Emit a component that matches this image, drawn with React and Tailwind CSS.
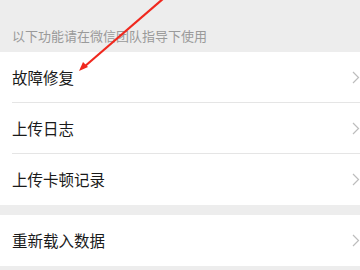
const items = ["故障修复", "上传日志", "上传卡顿记录"];

function Chevron() {
  return (
    <svg width="8" height="13" viewBox="0 0 8 13" className="shrink-0">
      <path d="M1 1l5.5 5.5L1 12" fill="none" stroke="#bdbdbd" strokeWidth="1.2" />
    </svg>
  );
}

function Row({ label, last }) {
  return (
    <div className="relative flex h-[51px] items-center justify-between bg-white pl-3 pr-0">
      <span className="text-[15.5px] text-[#1a1a1a]">{label}</span>
      <Chevron />
      {!last && <div className="absolute bottom-0 left-3 right-0 h-px bg-[#e5e5e5]" />}
    </div>
  );
}

export default function App() {
  return (
    <div
      className="relative h-[270px] w-[360px] overflow-hidden bg-[#ededed]"
      style={{ fontFamily: '"Noto Sans CJK SC", "Noto Sans", sans-serif' }}
    >
      <div className="flex h-[52px] items-end pb-[7px] pl-3 text-[13px] text-[#9a9a9a]">
        以下功能请在微信团队指导下使用
      </div>
      <div>
        {items.map((label, i) => (
          <Row key={label} label={label} last={i === items.length - 1} />
        ))}
      </div>
      <div className="h-[10px]" />
      <Row label="重新载入数据" last />
      <svg className="pointer-events-none absolute left-0 top-0" width="360" height="270">
        <line x1="164" y1="-2" x2="84" y2="67" stroke="#f0281e" strokeWidth="2.2" />
        <path d="M79 71 L83 62 L88 67 Z" fill="#f0281e" />
      </svg>
    </div>
  );
}
